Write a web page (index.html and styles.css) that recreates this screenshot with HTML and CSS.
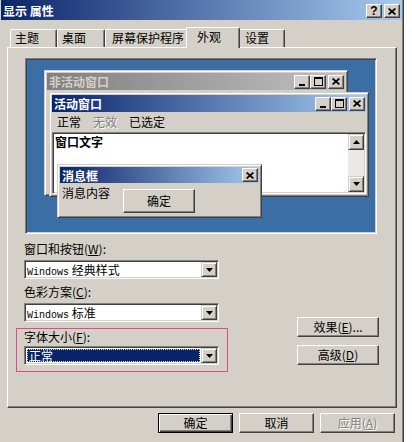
FILE: index.html
```html
<!DOCTYPE html>
<html>
<head>
<meta charset="utf-8">
<link rel="stylesheet" href="styles.css">
</head>
<body>
<div class="dialog">
  <div class="titlebar">
    <span class="title">显示 属性</span>
    <div class="capbtns">
      <span class="cbtn help">?</span>
      <span class="cbtn"><svg width="8" height="7" viewBox="0 0 8 7"><path d="M0.6 0.5L7.4 6.5M7.4 0.5L0.6 6.5" stroke="#000" stroke-width="1.7"/></svg></span>
    </div>
  </div>

  <div class="tabs">
    <div class="tab t1">主题</div>
    <div class="tab t2">桌面</div>
    <div class="tab t3">屏幕保护程序</div>
    <div class="tab sel">外观</div>
    <div class="tab t5">设置</div>
  </div>

  <div class="panel">
    <div class="preview">
      <div class="win inactive">
        <div class="wtitle gray">
          <span class="wname">非活动窗口</span>
          <div class="wbtns">
            <span class="cbtn min"><svg width="6" height="2"><rect width="6" height="2" fill="#000"/></svg></span>
            <span class="cbtn"><svg width="9" height="9" viewBox="0 0 9 9"><rect x="0.5" y="0.5" width="8" height="8" fill="none" stroke="#000"/><rect width="9" height="2" fill="#000"/></svg></span>
            <span class="cbtn gap"><svg width="8" height="7" viewBox="0 0 8 7"><path d="M0.6 0.5L7.4 6.5M7.4 0.5L0.6 6.5" stroke="#000" stroke-width="1.7"/></svg></span>
          </div>
        </div>
      </div>

      <div class="win active">
        <div class="wtitle blue">
          <span class="wname">活动窗口</span>
          <div class="wbtns">
            <span class="cbtn min"><svg width="6" height="2"><rect width="6" height="2" fill="#000"/></svg></span>
            <span class="cbtn"><svg width="9" height="9" viewBox="0 0 9 9"><rect x="0.5" y="0.5" width="8" height="8" fill="none" stroke="#000"/><rect width="9" height="2" fill="#000"/></svg></span>
            <span class="cbtn gap"><svg width="8" height="7" viewBox="0 0 8 7"><path d="M0.6 0.5L7.4 6.5M7.4 0.5L0.6 6.5" stroke="#000" stroke-width="1.7"/></svg></span>
          </div>
        </div>
        <div class="menu">
          <span>正常</span>
          <span class="dis">无效</span>
          <span>已选定</span>
        </div>
        <div class="textarea">
          <div class="wtext">窗口文字</div>
          <div class="scroll">
            <span class="sbtn"><svg width="7" height="4" viewBox="0 0 7 4"><path d="M3.5 0L7 4H0z" fill="#000"/></svg></span>
            <span class="track"></span>
            <span class="sbtn"><svg width="7" height="4" viewBox="0 0 7 4"><path d="M0 0H7L3.5 4z" fill="#000"/></svg></span>
          </div>
        </div>
      </div>

      <div class="win msg">
        <div class="wtitle blue mtitle">
          <span class="wname">消息框</span>
          <span class="cbtn"><svg width="8" height="7" viewBox="0 0 8 7"><path d="M0.6 0.5L7.4 6.5M7.4 0.5L0.6 6.5" stroke="#000" stroke-width="1.7"/></svg></span>
        </div>
        <div class="mbody">
          <span class="mtext">消息内容</span>
          <span class="btn mok">确定</span>
        </div>
      </div>
    </div>

    <div class="lower">
      <div class="leftcol">
        <div class="label">窗口和按钮(<u>W</u>):</div>
        <div class="combo">
          <span class="cval"><span class="lat">Windows</span> 经典样式</span>
          <span class="dbtn"><svg width="7" height="4" viewBox="0 0 7 4"><path d="M0 0H7L3.5 4z" fill="#000"/></svg></span>
        </div>
        <div class="label l2">色彩方案(<u>C</u>):</div>
        <div class="combo">
          <span class="cval"><span class="lat">Windows</span> 标准</span>
          <span class="dbtn"><svg width="7" height="4" viewBox="0 0 7 4"><path d="M0 0H7L3.5 4z" fill="#000"/></svg></span>
        </div>
        <div class="pink">
          <div class="label l3">字体大小(<u>F</u>):</div>
          <div class="combo c3">
            <span class="cval selv">正常</span>
            <span class="dbtn"><svg width="7" height="4" viewBox="0 0 7 4"><path d="M0 0H7L3.5 4z" fill="#000"/></svg></span>
          </div>
        </div>
      </div>
      <div class="rightcol">
        <span class="btn side">效果(<u>E</u>)...</span>
        <span class="btn side">高级(<u>D</u>)</span>
      </div>
    </div>
  </div>

  <div class="footer">
    <span class="btn foot default">确定</span>
    <span class="btn foot">取消</span>
    <span class="btn foot disabled">应用(<u>A</u>)</span>
  </div>
</div>
</body>
</html>
```

FILE: styles.css
```css
* { box-sizing: border-box; margin: 0; padding: 0; }

body {
  margin: 0;
  background: #ffffff;
  font-family: "Noto Sans CJK SC", "Noto Sans", sans-serif;
  font-size: 12px;
  color: #000;
}

u { text-decoration: underline; }

.dialog {
  width: 404px;
  height: 442px;
  background: #d4d0c8;
  border-right: 1px solid #404040;
  box-shadow: inset -1px 0 #808080;
  padding-left: 1px;
  overflow: hidden;
}

.titlebar {
  width: 401px;
  height: 20px;
  background: linear-gradient(90deg, #0a246a, #a6caf0);
  display: flex;
  justify-content: space-between;
  align-items: flex-start;
  padding: 0 2px;
}

.title {
  color: #fff;
  font-weight: bold;
  font-size: 12px;
  line-height: 20px;
  padding-top: 1px;
}

.capbtns {
  display: flex;
  gap: 2px;
  margin-top: 4px;
}

.cbtn {
  width: 16px;
  height: 14px;
  background: #d4d0c8;
  border: 1px solid;
  border-color: #fff #404040 #404040 #fff;
  box-shadow: inset -1px -1px #808080;
  display: flex;
  align-items: center;
  justify-content: center;
  flex: none;
}

.cbtn.help {
  font-family: "Liberation Sans", sans-serif;
  font-weight: bold;
  font-size: 12px;
  line-height: 12px;
}

.cbtn.min {
  align-items: flex-end;
  padding-bottom: 2px;
  padding-right: 1px;
}

.cbtn.gap { margin-left: 2px; }

/* tabs */
.tabs {
  display: flex;
  align-items: flex-end;
  height: 20px;
  margin-top: 7px;
  padding-left: 9px;
  position: relative;
  z-index: 2;
}

.tab {
  height: 18px;
  background: #d4d0c8;
  border-left: 1px solid #fff;
  border-top: 1px solid #fff;
  border-right: 1px solid #404040;
  box-shadow: inset -1px 0 #808080;
  border-top-left-radius: 2px;
  border-top-right-radius: 2px;
  line-height: 16px;
  white-space: nowrap;
}

.t1 { width: 47px; padding-left: 4px; }
.t2 { width: 48px; padding-left: 4px; }
.t3 { width: 83px; padding-left: 6px; }
.sel {
  width: 54px;
  height: 21px;
  margin: 0 -2px -1px -2px;
  padding-left: 10px;
  line-height: 17px;
  position: relative;
  z-index: 3;
}
.t5 { width: 47px; padding-left: 6px; }

/* panel */
.panel {
  width: 390px;
  height: 361px;
  margin-left: 6px;
  border-left: 1px solid #fff;
  border-top: 1px solid #fff;
  border-right: 1px solid #404040;
  border-bottom: 1px solid #404040;
  box-shadow: inset -1px -1px #808080;
}

.preview {
  position: relative;
  width: 352px;
  height: 176px;
  margin: 10px 0 0 17px;
  background: #3a6ea5;
  border: 1px solid;
  border-color: #808080 #fff #fff #808080;
  box-shadow: inset 1px 1px #404040, inset -1px -1px #d4d0c8;
}

.win {
  position: absolute;
  background: #d4d0c8;
  border: 1px solid;
  border-color: #d4d0c8 #404040 #404040 #d4d0c8;
  box-shadow: inset 1px 1px #fff, inset -1px -1px #808080;
  padding: 2px;
  display: flex;
  flex-direction: column;
}

.inactive { left: 18px; top: 11px; width: 304px; height: 126px; }
.active { left: 23px; top: 33px; width: 320px; height: 105px; }
.msg { left: 31px; top: 105px; width: 205px; height: 54px; }

.wtitle {
  height: 17px;
  display: flex;
  justify-content: space-between;
  align-items: center;
  padding: 0 1px 0 2px;
  flex: none;
}

.wtitle.gray { background: linear-gradient(90deg, #808080, #c0c0c0); }
.wtitle.gray .wname { color: #d4d0c8; }
.wtitle.blue { background: linear-gradient(90deg, #0a246a, #a6caf0); }
.wtitle.blue .wname { color: #fff; }

.wname {
  font-weight: bold;
  font-size: 12px;
  line-height: 17px;
}

.wbtns { display: flex; }

.menu {
  height: 20px;
  display: flex;
  gap: 12px;
  padding-left: 5px;
  line-height: 20px;
  flex: none;
}

.dis {
  color: #808080;
  text-shadow: 1px 1px #fff;
}

.textarea {
  flex: 1;
  display: flex;
  background: #fff;
  border: 1px solid;
  border-color: #808080 #fff #fff #808080;
  box-shadow: inset 1px 1px #404040, inset -1px -1px #d4d0c8;
  padding: 1px;
}

.wtext {
  flex: 1;
  font-weight: bold;
  line-height: 14px;
  padding: 1px 0 0 1px;
}

.scroll {
  width: 16px;
  display: flex;
  flex-direction: column;
}

.sbtn {
  width: 16px;
  height: 16px;
  background: #d4d0c8;
  border: 1px solid;
  border-color: #d4d0c8 #404040 #404040 #d4d0c8;
  box-shadow: inset 1px 1px #fff, inset -1px -1px #808080;
  display: flex;
  align-items: center;
  justify-content: center;
  flex: none;
}

.track {
  flex: 1;
  background: #ebe9e5;
}

.mtitle { height: 16px; }

.mbody {
  display: flex;
  align-items: flex-start;
}

.mtext {
  padding: 3px 0 0 2px;
  line-height: 14px;
}

.btn {
  display: flex;
  align-items: center;
  justify-content: center;
  height: 20px;
  background: #d4d0c8;
  border: 1px solid;
  border-color: #fff #404040 #404040 #fff;
  box-shadow: inset -1px -1px #808080;
  line-height: 16px;
  white-space: nowrap;
  flex: none;
}

.mok {
  width: 72px;
  height: 24px;
  margin: 6px 0 0 13px;
}

/* lower controls */
.lower {
  display: flex;
  margin-left: 8px;
}

.leftcol {
  width: 212px;
  display: flex;
  flex-direction: column;
}

.label {
  height: 14px;
  line-height: 14px;
  padding-left: 8px;
  margin-top: 8px;
  white-space: nowrap;
}

.label.l2 { margin-top: 6px; }
.label.l3 { margin-top: 1px; padding-left: 7px; }

.combo {
  width: 195px;
  height: 19px;
  margin: 4px 0 0 8px;
  background: #fff;
  border: 1px solid;
  border-color: #808080 #fff #fff #808080;
  box-shadow: inset 1px 1px #404040, inset -1px -1px #d4d0c8;
  padding: 1px;
  display: flex;
}

.cval {
  flex: 1;
  line-height: 15px;
  padding-left: 1px;
  white-space: nowrap;
}

.lat {
  font-family: "Liberation Mono", monospace;
  font-size: 10px;
}

.dbtn {
  width: 16px;
  height: 15px;
  background: #d4d0c8;
  border: 1px solid;
  border-color: #d4d0c8 #404040 #404040 #d4d0c8;
  box-shadow: inset 1px 1px #fff, inset -1px -1px #808080;
  display: flex;
  align-items: center;
  justify-content: center;
  flex: none;
}

.pink {
  margin-top: 6px;
  width: 212px;
  height: 44px;
  border: 1px solid #dd4b8a;
}

.combo.c3 { margin: 2px 0 0 7px; }

.selv {
  margin: 1px 1px 0 1px;
  height: 13px;
  line-height: 11px;
  padding-left: 1px;
  background: #0a246a;
  color: #fff;
  border: 1px dotted #d8d8d8;
}

.rightcol {
  display: flex;
  flex-direction: column;
  gap: 8px;
  margin-left: 69px;
  padding-top: 83px;
}

.btn.side { width: 82px; }

.footer {
  display: flex;
  gap: 6px;
  padding-left: 157px;
  margin-top: 5px;
}

.btn.foot { width: 75px; }

.btn.default {
  border-color: #000;
  box-shadow: inset 1px 1px #fff, inset -1px -1px #404040, inset -2px -2px #808080;
}

.btn.disabled {
  color: #808080;
  text-shadow: 1px 1px #fff;
}
```
